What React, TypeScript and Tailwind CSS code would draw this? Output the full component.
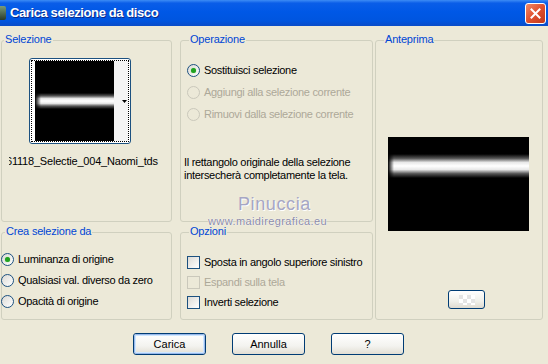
import React from 'react'

const font = { fontFamily: '"Liberation Sans", Arial, sans-serif' }

function Group({
  label,
  labelLeft,
  className,
  children,
}: {
  label: string
  labelLeft: string
  className: string
  children?: React.ReactNode
}) {
  return (
    <div className={`relative border border-[#d0d0bf] rounded-[3px] ${className}`}>
      <span
        className={`absolute -top-[8px] ${labelLeft} bg-[#ece9d8] px-[1px] text-[11px] leading-[13px] tracking-[-0.2px] text-[#0046d5]`}
      >
        {label}
      </span>
      {children}
    </div>
  )
}

function Radio({ checked, disabled, label }: { checked?: boolean; disabled?: boolean; label: string }) {
  return (
    <div className="flex items-center h-[22px]">
      <div
        className={`w-[13px] h-[13px] shrink-0 rounded-full border flex items-center justify-center ${
          disabled
            ? 'border-[#cac8bb] bg-[#ece9d8]'
            : 'border-[#1c5180] bg-[linear-gradient(135deg,#dcdad5,#ffffff)]'
        }`}
      >
        {checked && <div className="w-[5px] h-[5px] rounded-full bg-[#21a121] shadow-[0_0_1px_#6cd66c]" />}
      </div>
      <span
        className={`ml-[4px] whitespace-nowrap text-[11px] tracking-[-0.3px] ${
          disabled ? 'text-[#aca899]' : 'text-black'
        }`}
      >
        {label}
      </span>
    </div>
  )
}

function Check({ disabled, label }: { disabled?: boolean; label: string }) {
  return (
    <div className="flex items-center h-[20px]">
      <div
        className={`w-[13px] h-[13px] shrink-0 border ${
          disabled
            ? 'border-[#cac8bb] bg-[#ece9d8]'
            : 'border-[#1c5180] bg-[linear-gradient(135deg,#dcdad5,#ffffff)]'
        }`}
      />
      <span
        className={`ml-[4px] whitespace-nowrap text-[11px] tracking-[-0.3px] ${
          disabled ? 'text-[#aca899]' : 'text-black'
        }`}
      >
        {label}
      </span>
    </div>
  )
}

function XpButton({ children, def }: { children: React.ReactNode; def?: boolean }) {
  return (
    <div className="w-[73px] h-[22px] rounded-[3px] border border-[#003c74] bg-[linear-gradient(180deg,#ffffff,#f3f3ef_60%,#e2ded3)] flex">
      <div
        className={`flex-1 flex items-center justify-center rounded-[2px] text-[11px] text-black ${
          def ? 'border border-[#98b8ea] shadow-[inset_0_0_0_1px_#cee7ff]' : ''
        }`}
      >
        {children}
      </div>
    </div>
  )
}

function Stripe({ h }: { h: string }) {
  return (
    <div
      className={`${h} w-full bg-[linear-gradient(180deg,#000_0%,#555_18%,#e8e8e8_35%,#fff_50%,#e8e8e8_65%,#555_82%,#000_100%)] [mask-image:linear-gradient(90deg,transparent_0px,#000_6px)]`}
    />
  )
}

export default function App() {
  return (
    <div className="relative w-[548px] h-[364px] overflow-hidden bg-[#ece9d8]" style={font}>
      {/* title bar */}
      <div className="h-[26px] flex items-center bg-[linear-gradient(180deg,#3d8cf5_0%,#0a5de8_12%,#0058e6_45%,#0055df_80%,#0a4cc8_100%)]">
        <div className="w-[6px] h-[14px] bg-[linear-gradient(180deg,#7a9c7a,#2a3a2a)] rounded-r-[2px]" />
        <span className="ml-[4px] text-[13px] tracking-[-0.4px] font-bold text-white [text-shadow:1px_1px_#0b2a8a]">
          Carica selezione da disco
        </span>
        <div className="ml-auto mr-[2px] w-[21px] h-[21px] rounded-[3px] border border-white bg-[linear-gradient(135deg,#f08a6a,#e0502e_50%,#c0381c)] flex items-center justify-center">
          <svg width="11" height="11" viewBox="0 0 11 11">
            <path d="M1.5 1.5 L9.5 9.5 M9.5 1.5 L1.5 9.5" stroke="white" strokeWidth="2" strokeLinecap="square" />
          </svg>
        </div>
      </div>

      {/* groups */}
      <div className="flex pt-[14px] pl-[1px]">
        <div className="flex flex-col w-[171px]">
          <Group label="Selezione" labelLeft="left-[2px]" className="h-[182px]">
            <div className="ml-[27px] mt-[17px] w-[102px] h-[86px] rounded-[3px] border border-[#1c5180] bg-white p-[1px]">
              <div className="w-full h-full border border-dotted border-black flex">
                <div className="w-[79px] ml-[3px] bg-black flex flex-col justify-center">
                  <Stripe h="h-[16px]" />
                </div>
                <div className="flex-1 bg-[#f4f4f4] flex items-center justify-end pr-[1px]">
                  <svg width="5" height="3" viewBox="0 0 5 3">
                    <path d="M0 0 H5 L2.5 3 Z" fill="black" />
                  </svg>
                </div>
              </div>
            </div>
            <div className="ml-[7px] mt-[11px] w-[153px] overflow-hidden whitespace-nowrap text-[11px] leading-[13px] tracking-[-0.2px] text-black">
              <span className="-ml-[3px] inline-block">61118_Selectie_004_Naomi_tds</span>
            </div>
          </Group>
          <Group label="Crea selezione da" labelLeft="left-[3px]" className="mt-[10px] h-[88px]">
            <div className="pt-[16px] -ml-[1px]">
              <div className="[&>div]:h-[21px]">
                <Radio checked label="Luminanza di origine" />
                <Radio label="Qualsiasi val. diverso da zero" />
                <Radio label="Opacità di origine" />
              </div>
            </div>
          </Group>
        </div>

        <div className="flex flex-col w-[193px] ml-[8px]">
          <Group label="Operazione" labelLeft="left-[8px]" className="h-[182px]">
            <div className="pt-[18px] pl-[6px]">
              <Radio checked label="Sostituisci selezione" />
              <Radio disabled label="Aggiungi alla selezione corrente" />
              <Radio disabled label="Rimuovi dalla selezione corrente" />
            </div>
            <p className="mt-[31px] ml-[3px] text-[11px] leading-[13px] tracking-[-0.3px] text-black whitespace-nowrap">
              Il rettangolo originale della selezione
              <br />
              intersecherà completamente la tela.
            </p>
          </Group>
          <Group label="Opzioni" labelLeft="left-[8px]" className="mt-[10px] h-[88px]">
            <div className="pt-[19px] pl-[6px]">
              <Check label="Sposta in angolo superiore sinistro" />
              <Check disabled label="Espandi sulla tela" />
              <Check label="Inverti selezione" />
            </div>
          </Group>
        </div>

        <div className="ml-[2px] w-[168px]">
          <Group label="Anteprima" labelLeft="left-[8px]" className="h-[280px]">
            <div className="ml-[12px] mt-[96px] w-[141px] h-[94px] bg-black pt-[17px]">
              <Stripe h="h-[24px]" />
            </div>
            <div className="ml-[72px] mt-[59px] w-[37px] h-[19px] rounded-[3px] border border-[#003c74] bg-[linear-gradient(180deg,#ffffff,#f0f0ea_60%,#dedad0)] flex items-center justify-center">
              <div className="w-[16px] h-[10px] bg-[conic-gradient(#ffffff_25%,#e4e4e4_0_50%,#ffffff_0_75%,#e4e4e4_0)] bg-[length:8px_8px]" />
            </div>
          </Group>
        </div>
      </div>

      {/* buttons */}
      <div className="flex pl-[133px] mt-[13px] gap-[26px]">
        <XpButton def>Carica</XpButton>
        <XpButton>Annulla</XpButton>
        <XpButton>?</XpButton>
      </div>

      {/* watermark */}
      <div className="absolute left-[238px] top-[194px] text-[18px] leading-[20px] tracking-[0.6px] text-[#a6a6c4] [text-shadow:1px_1px_#ffffff]">
        Pinuccia
      </div>
      <div className="absolute left-[208px] top-[215px] text-[11px] leading-[12px] tracking-[0.4px] text-[#8a8aa6] [text-shadow:0_0_1px_#ffffff,0_0_1px_#ffffff]">
        www.maidiregrafica.eu
      </div>
    </div>
  )
}
